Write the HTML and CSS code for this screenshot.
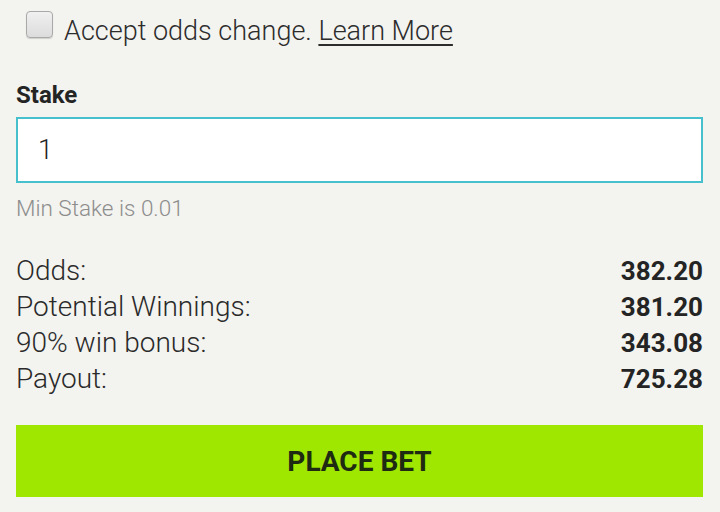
FILE: index.html
```html
<!DOCTYPE html>
<html>
<head>
<meta charset="utf-8">
<link rel="stylesheet" href="styles.css">
</head>
<body>
<div class="slip">
  <label class="accept">
    <span class="box"></span>
    <span class="accept-text">Accept odds change. <a class="learn">Learn More</a></span>
  </label>
  <div class="stake-label">Stake</div>
  <div class="input">1</div>
  <div class="min">Min Stake is 0.01</div>
  <div class="rows">
    <div class="row"><span>Odds:</span><b>382.20</b></div>
    <div class="row"><span>Potential Winnings:</span><b>381.20</b></div>
    <div class="row"><span>90% win bonus:</span><b>343.08</b></div>
    <div class="row"><span>Payout:</span><b>725.28</b></div>
  </div>
  <div class="btn">PLACE BET</div>
</div>
</body>
</html>
```
FILE: styles.css
```css
html, body {
  margin: 0;
  background: #f3f3ef;
}
body {
  font-family: Roboto, "Noto Sans", sans-serif;
  color: #2a2a2a;
}
.slip {
  padding: 11px 17px 0 16px;
  display: flex;
  flex-direction: column;
}
.accept {
  display: flex;
  align-items: center;
  gap: 11px;
  padding-left: 10px;
  height: 40px;
}
.box {
  width: 25px;
  height: 25px;
  border: 1px solid #a9a9a9;
  border-radius: 4px;
  background: linear-gradient(#f0f0f0, #dcdcdc);
  box-shadow: 0 1px 1px rgba(0,0,0,0.15);
  margin-top: -13px;
}
.accept-text {
  font-size: 27px;
  font-weight: 300;
  color: #2c2c2c;
}
.learn {
  text-decoration: underline;
  text-underline-offset: 4px;
  text-decoration-thickness: 2px;
}
.stake-label {
  margin-top: 30px;
  font-size: 24px;
  font-weight: 700;
  color: #242424;
}
.input {
  margin-top: 8px;
  height: 62px;
  border: 2px solid #45c0cc;
  background: #fff;
  font-size: 27px;
  font-weight: 300;
  color: #222;
  display: flex;
  align-items: center;
  padding-left: 20px;
}
.min {
  margin-top: 12px;
  font-size: 22.5px;
  font-weight: 300;
  color: #8d8d8d;
}
.rows {
  margin-top: 32px;
  display: flex;
  flex-direction: column;
}
.row {
  display: flex;
  justify-content: space-between;
  height: 36px;
  line-height: 36px;
  font-size: 28px;
  font-weight: 300;
  color: #2a2a2a;
}
.row b {
  font-size: 26px;
  font-weight: 700;
  color: #242424;
}
.btn {
  margin-top: 28px;
  height: 72px;
  background: #9fe600;
  display: flex;
  align-items: center;
  justify-content: center;
  font-size: 28px;
  font-weight: 700;
  color: #1e2a12;
}
```
